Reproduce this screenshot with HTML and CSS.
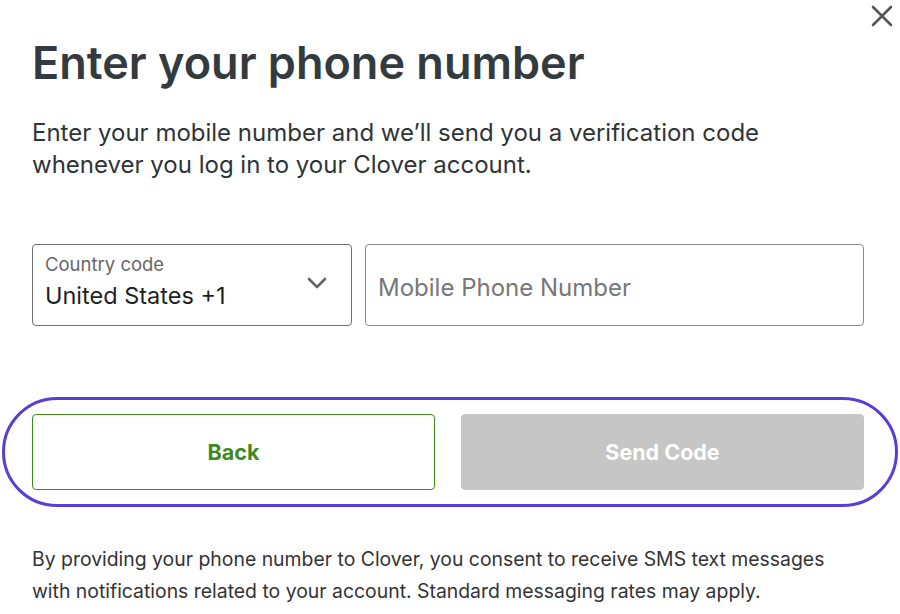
FILE: index.html
```html
<!DOCTYPE html>
<html lang="en">
<head>
<meta charset="utf-8">
<title>Enter your phone number</title>
<link rel="stylesheet" href="styles.css">
</head>
<body>
<div class="modal">
  <button class="close" aria-label="Close">
    <svg width="22" height="22" viewBox="0 0 22 22"><path d="M2 2 L20 20 M20 2 L2 20" stroke="#555" stroke-width="2.6" stroke-linecap="round"/></svg>
  </button>
  <h1 class="title">Enter your phone number</h1>
  <p class="lead">Enter your mobile number and we’ll send you a verification code whenever you log in to your Clover account.</p>
  <div class="fields">
    <div class="select">
      <div class="select-text">
        <span class="select-label">Country code</span>
        <span class="select-value">United States +1</span>
      </div>
      <svg class="chevron" width="20" height="12" viewBox="0 0 20 12"><path d="M2 2 L10 10 L18 2" fill="none" stroke="#666" stroke-width="2.6" stroke-linecap="round" stroke-linejoin="round"/></svg>
    </div>
    <div class="phone"><span class="placeholder">Mobile Phone Number</span></div>
  </div>
  <div class="actions-wrap">
    <div class="actions">
      <button class="btn btn-back">Back</button>
      <button class="btn btn-send">Send Code</button>
    </div>
  </div>
  <p class="legal">By providing your phone number to Clover, you consent to receive SMS text messages with notifications related to your account. Standard messaging rates may apply.</p>
</div>
</body>
</html>
```
FILE: styles.css
```css
* { box-sizing: border-box; }
html, body { margin: 0; padding: 0; background: #fff; }
body { font-family: Inter, "Noto Sans", "Liberation Sans", sans-serif; color: #333b3f; }
.modal { position: relative; width: 900px; height: 614px; padding: 0 36px 0 32px; overflow: hidden; }
.close { position: absolute; top: 4px; right: 6px; width: 24px; height: 24px; padding: 0; border: 0; background: none; display: flex; align-items: center; justify-content: center; }
.title { margin: 0; padding-top: 36px; font-size: 45px; font-weight: 600; line-height: 54px; letter-spacing: 0; color: #343b3f; }
.lead { margin: 27px 0 0; font-size: 24px; line-height: 32px; color: #2f3437; width: 800px; }
.fields { display: flex; gap: 13px; margin-top: 63px; }
.select { width: 320px; height: 82px; border: 1px solid #6f6f6f; border-radius: 4px; display: flex; align-items: center; padding: 0 24px 0 12px; }
.select-text { flex: 1; display: flex; flex-direction: column; }
.select-label { font-size: 18.5px; line-height: 22px; color: #666; margin-top: -6px; }
.select-value { font-size: 23.5px; line-height: 30px; color: #1f1f1f; margin-top: 6px; }
.chevron { margin-top: -4px; }
.phone { flex: 1; height: 82px; border: 1px solid #8a8a8a; border-radius: 4px; display: flex; align-items: center; padding: 0 12px; }
.placeholder { font-size: 24px; color: #777; margin-top: 4px; }
.actions-wrap { margin: 71px -34px 0 -30px; height: 110px; border: 3px solid #5a3dd4; border-radius: 56px; display: flex; align-items: center; padding: 0 31px 0 27px; }
.actions { display: flex; gap: 26px; width: 100%; }
.btn { flex: 1; height: 76px; border-radius: 4px; font-family: inherit; font-size: 21.5px; font-weight: 700; }
.btn-back { background: #fff; border: 1px solid #3e8a1f; color: #3e8a1f; }
.btn-send { background: #c6c6c6; border: 1px solid #c6c6c6; color: #fff; }
.legal { margin: 36px 0 0; font-size: 19.4px; line-height: 32px; color: #333; width: 830px; }
```
